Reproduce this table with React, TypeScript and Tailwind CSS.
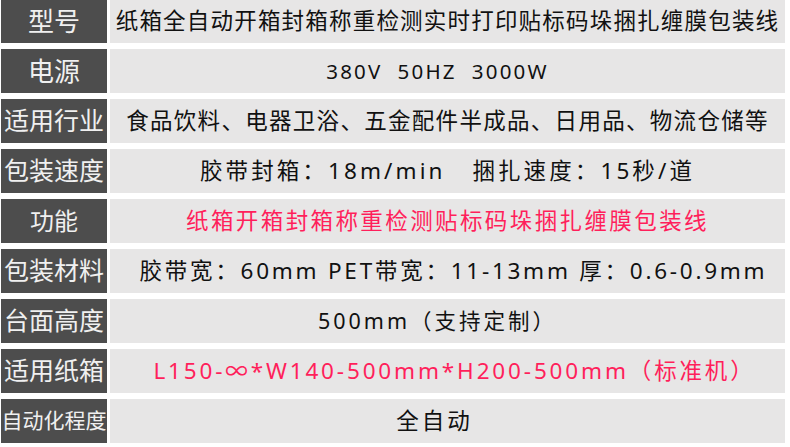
import React from "react";

type Row = {
  label: string;
  labelSize: string;
  value: string;
  valueClass: string;
  pink?: boolean;
};

const rows: Row[] = [
  { label: "型号", labelSize: "text-[26px]", value: "纸箱全自动开箱封箱称重检测实时打印贴标码垛捆扎缠膜包装线", valueClass: "text-[22.5px] tracking-[1.2px]" },
  { label: "电源", labelSize: "text-[26px]", value: "380V  50HZ  3000W", valueClass: "text-[20.5px] tracking-[2.2px] pr-[20px]" },
  { label: "适用行业", labelSize: "text-[25px]", value: "食品饮料、电器卫浴、五金配件半成品、日用品、物流仓储等", valueClass: "text-[22.5px] tracking-[1.3px]" },
  { label: "包装速度", labelSize: "text-[25px]", value: "胶带封箱：18m/min   捆扎速度：15秒/道", valueClass: "text-[22.5px] tracking-[3.1px]" },
  { label: "功能", labelSize: "text-[24px]", value: "纸箱开箱封箱称重检测贴标码垛捆扎缠膜包装线", valueClass: "text-[22.5px] tracking-[2.4px]", pink: true },
  { label: "包装材料", labelSize: "text-[25px]", value: "胶带宽：60mm PET带宽：11-13mm 厚：0.6-0.9mm", valueClass: "text-[22.5px] tracking-[2.75px] pl-[12px]" },
  { label: "台面高度", labelSize: "text-[25px]", value: "500mm（支持定制）", valueClass: "text-[21.5px] tracking-[3px] pr-[20px]" },
  { label: "适用纸箱", labelSize: "text-[25px]", value: "L150-∞*W140-500mm*H200-500mm（标准机）", valueClass: "text-[22.5px] tracking-[2.85px] pl-[14px]", pink: true },
  { label: "自动化程度", labelSize: "text-[21px]", value: "全自动", valueClass: "text-[22.5px] tracking-[3px] pr-[26px]" },
];

const App: React.FC = () => {
  return (
    <div
      className="w-[790px] h-[447px] bg-white overflow-hidden"
      style={{ fontFamily: '"Noto Sans", "Noto Sans CJK SC", sans-serif' }}
    >
      <div className="flex flex-col gap-[6px] -mt-px pl-px">
        {rows.map((row) => (
          <div key={row.label} className="flex gap-[3px] h-[44px]">
            <div
              className={`w-[106px] bg-[#4d4d4d] text-[#f0f0f0] flex items-center justify-center whitespace-nowrap ${row.labelSize}`}
            >
              {row.label}
            </div>
            <div
              className={`w-[675px] bg-[#e7e6e6] flex items-center justify-center whitespace-pre ${row.valueClass} ${
                row.pink ? "text-[#ff1f5b]" : "text-[#111111]"
              }`}
            >
              {row.value}
            </div>
          </div>
        ))}
      </div>
    </div>
  );
};

export default App;
